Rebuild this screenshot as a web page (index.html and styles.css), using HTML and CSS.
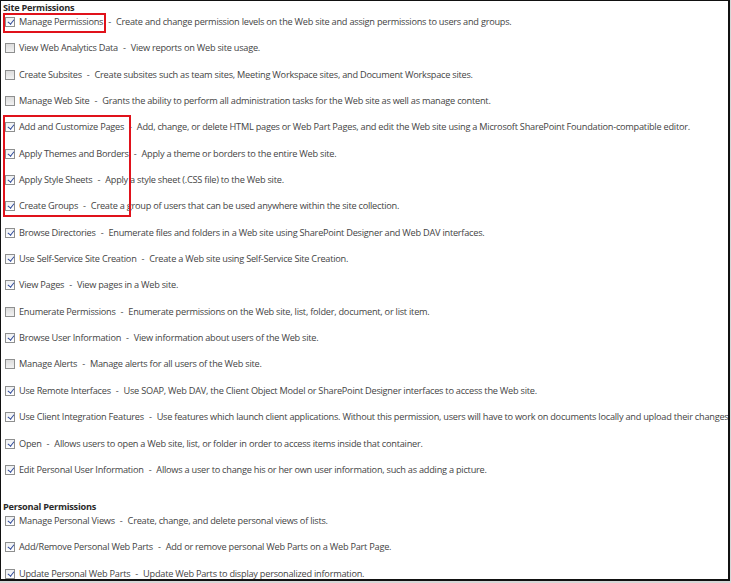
FILE: index.html
```html
<!DOCTYPE html>
<html>
<head>
<meta charset="utf-8">
<link rel="stylesheet" href="styles.css">
</head>
<body>
<div class="frame">
  <div class="section-title first">Site Permissions</div>
  <div class="list">
    <div class="row"><span class="cb on"></span><span class="name">Manage Permissions</span><span class="sep">-</span><span class="desc">Create and change permission levels on the Web site and assign permissions to users and groups.</span></div>
    <div class="row"><span class="cb"></span><span class="name">View Web Analytics Data</span><span class="sep">-</span><span class="desc">View reports on Web site usage.</span></div>
    <div class="row"><span class="cb"></span><span class="name">Create Subsites</span><span class="sep">-</span><span class="desc">Create subsites such as team sites, Meeting Workspace sites, and Document Workspace sites.</span></div>
    <div class="row"><span class="cb"></span><span class="name">Manage Web Site</span><span class="sep">-</span><span class="desc">Grants the ability to perform all administration tasks for the Web site as well as manage content.</span></div>
    <div class="row"><span class="cb on"></span><span class="name">Add and Customize Pages</span><span class="sep">-</span><span class="desc">Add, change, or delete HTML pages or Web Part Pages, and edit the Web site using a Microsoft SharePoint Foundation-compatible editor.</span></div>
    <div class="row"><span class="cb on"></span><span class="name">Apply Themes and Borders</span><span class="sep">-</span><span class="desc">Apply a theme or borders to the entire Web site.</span></div>
    <div class="row"><span class="cb on"></span><span class="name">Apply Style Sheets</span><span class="sep">-</span><span class="desc">Apply a style sheet (.CSS file) to the Web site.</span></div>
    <div class="row"><span class="cb on"></span><span class="name">Create Groups</span><span class="sep">-</span><span class="desc">Create a group of users that can be used anywhere within the site collection.</span></div>
    <div class="row"><span class="cb on"></span><span class="name">Browse Directories</span><span class="sep">-</span><span class="desc">Enumerate files and folders in a Web site using SharePoint Designer and Web DAV interfaces.</span></div>
    <div class="row"><span class="cb on"></span><span class="name">Use Self-Service Site Creation</span><span class="sep">-</span><span class="desc">Create a Web site using Self-Service Site Creation.</span></div>
    <div class="row"><span class="cb on"></span><span class="name">View Pages</span><span class="sep">-</span><span class="desc">View pages in a Web site.</span></div>
    <div class="row"><span class="cb"></span><span class="name">Enumerate Permissions</span><span class="sep">-</span><span class="desc">Enumerate permissions on the Web site, list, folder, document, or list item.</span></div>
    <div class="row"><span class="cb on"></span><span class="name">Browse User Information</span><span class="sep">-</span><span class="desc">View information about users of the Web site.</span></div>
    <div class="row"><span class="cb"></span><span class="name">Manage Alerts</span><span class="sep">-</span><span class="desc">Manage alerts for all users of the Web site.</span></div>
    <div class="row"><span class="cb on"></span><span class="name">Use Remote Interfaces</span><span class="sep">-</span><span class="desc">Use SOAP, Web DAV, the Client Object Model or SharePoint Designer interfaces to access the Web site.</span></div>
    <div class="row"><span class="cb on"></span><span class="name">Use Client Integration Features</span><span class="sep">-</span><span class="desc">Use features which launch client applications. Without this permission, users will have to work on documents locally and upload their changes.</span></div>
    <div class="row"><span class="cb on"></span><span class="name">Open</span><span class="sep">-</span><span class="desc">Allows users to open a Web site, list, or folder in order to access items inside that container.</span></div>
    <div class="row"><span class="cb on"></span><span class="name">Edit Personal User Information</span><span class="sep">-</span><span class="desc">Allows a user to change his or her own user information, such as adding a picture.</span></div>
  </div>
  <div class="section-title second">Personal Permissions</div>
  <div class="list">
    <div class="row"><span class="cb on"></span><span class="name">Manage Personal Views</span><span class="sep">-</span><span class="desc">Create, change, and delete personal views of lists.</span></div>
    <div class="row"><span class="cb on"></span><span class="name">Add/Remove Personal Web Parts</span><span class="sep">-</span><span class="desc">Add or remove personal Web Parts on a Web Part Page.</span></div>
    <div class="row"><span class="cb on"></span><span class="name">Update Personal Web Parts</span><span class="sep">-</span><span class="desc">Update Web Parts to display personalized information.</span></div>
  </div>
  <div class="highlight hl-one"></div>
  <div class="highlight hl-two"></div>
</div>
</body>
</html>
```

FILE: styles.css
```css
html {
  background: #d6d6d6;
}
body {
  margin: 0;
  font-family: "Open Sans", "Noto Sans", "DejaVu Sans", sans-serif;
  font-size: 9.2px;
  letter-spacing: -0.24px;
  color: #444444;
}
.frame {
  position: relative;
  box-sizing: border-box;
  width: 730px;
  height: 581px;
  background: #ffffff;
  border-top: 1px solid #111;
  border-left: 1px solid #111;
  border-right: 2px solid #111;
  border-bottom: 2px solid #111;
  overflow: hidden;
}
.section-title {
  font-weight: 700;
  color: #2b2b2b;
  line-height: 14px;
  height: 14px;
  padding-left: 2px;
  white-space: nowrap;
}
.section-title.second {
  margin-top: 24px;
}
.list {
  display: flex;
  flex-direction: column;
  gap: 14.35px;
  padding-left: 4px;
}
.section-title.first + .list {
  margin-top: 1px;
}
.section-title.second + .list {
  margin-top: 1px;
}
.row {
  display: flex;
  align-items: center;
  height: 12px;
  line-height: 12px;
  white-space: nowrap;
}
.cb {
  box-sizing: border-box;
  flex: none;
  width: 10px;
  height: 10px;
  border: 1px solid #8e8f8f;
  background: linear-gradient(#dcdcdc, #f2f2f2);
  margin-right: 4px;
  position: relative;
}
.cb.on {
  background: linear-gradient(#eef0f3, #ffffff);
}
.cb.on::after {
  content: "";
  position: absolute;
  left: 2.5px;
  top: 0px;
  width: 2.5px;
  height: 5px;
  border-right: 1.6px solid #2a4597;
  border-bottom: 1.6px solid #2a4597;
  transform: rotate(38deg);
}
.sep {
  margin: 0 5px;
}
.highlight {
  position: absolute;
  box-sizing: border-box;
  border: 2px solid #e0121b;
}
.hl-one {
  left: 2px;
  top: 12px;
  width: 103px;
  height: 20px;
}
.hl-two {
  left: 2px;
  top: 114px;
  width: 128px;
  height: 102px;
}
```
